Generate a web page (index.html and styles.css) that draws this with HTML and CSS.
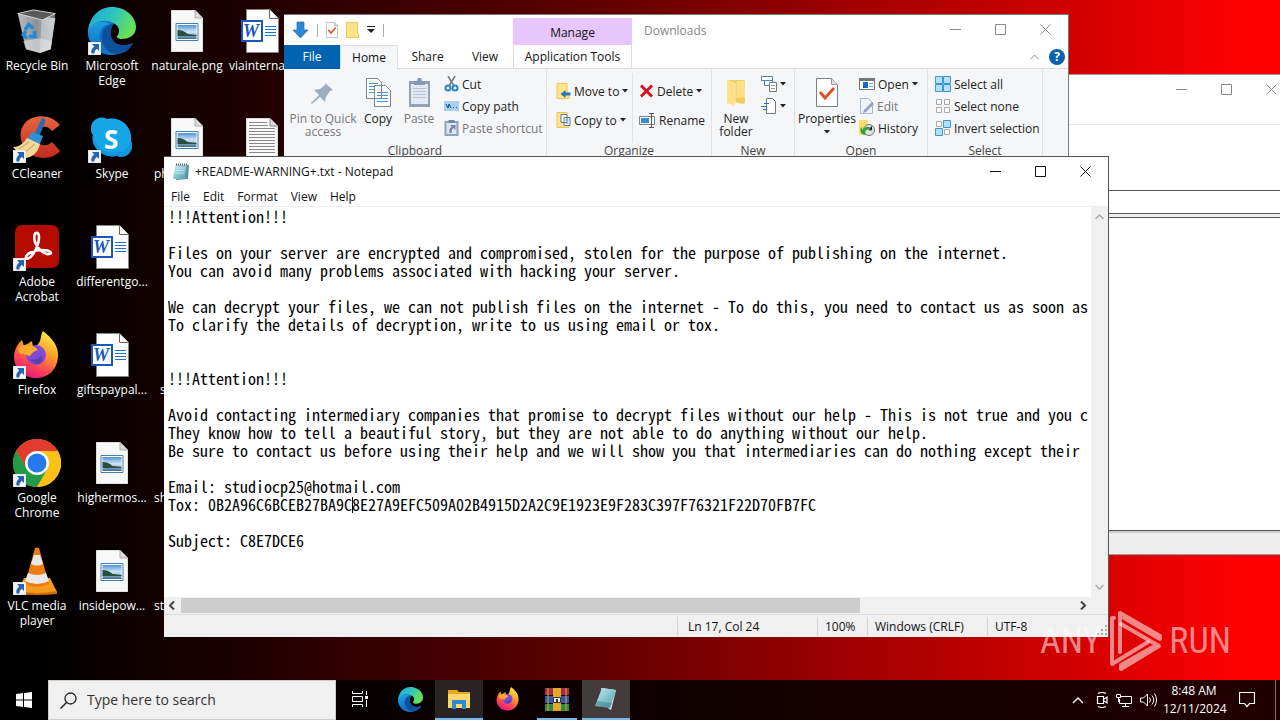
FILE: index.html
```html
<!DOCTYPE html>
<html lang="en">
<head>
<meta charset="utf-8">
<title>Desktop</title>
<link rel="stylesheet" href="styles.css">
</head>
<body>
<svg class="sprite" aria-hidden="true">
  <defs>
    <linearGradient id="edgeBlue" x1="0" y1="0" x2="0" y2="1"><stop offset="0" stop-color="#1fa0e0"/><stop offset="1" stop-color="#0f6fc4"/></linearGradient>
    <linearGradient id="edgeGreen" x1="0" y1="0" x2="1" y2=".4"><stop offset="0" stop-color="#1fa4dc"/><stop offset=".5" stop-color="#2cc3c4"/><stop offset="1" stop-color="#66df58"/></linearGradient>
    <linearGradient id="bin" x1="0" y1="0" x2="1" y2="0"><stop offset="0" stop-color="#b9bcbf"/><stop offset=".5" stop-color="#8f9194"/><stop offset="1" stop-color="#c6c8ca"/></linearGradient>
    <linearGradient id="fox" x1=".8" y1="0" x2=".3" y2="1"><stop offset="0" stop-color="#fff04a"/><stop offset=".4" stop-color="#ff9f28"/><stop offset=".75" stop-color="#fc3f55"/><stop offset="1" stop-color="#e31587"/></linearGradient>
    <linearGradient id="cc" x1="0" y1="0" x2="0" y2="1"><stop offset="0" stop-color="#e6643f"/><stop offset="1" stop-color="#c22b1e"/></linearGradient>
    <linearGradient id="note" x1="0" y1="0" x2="1" y2="1"><stop offset="0" stop-color="#c4ecf2"/><stop offset="1" stop-color="#4d9dae"/></linearGradient>
    <linearGradient id="sky" x1="0" y1="0" x2="0" y2="1"><stop offset="0" stop-color="#4f93d8"/><stop offset=".5" stop-color="#d3e6f4"/><stop offset="1" stop-color="#3c6e90"/></linearGradient>
  </defs>
  <symbol id="shortcut" viewBox="0 0 13 13"><path fill="#f4f4f4" stroke="#bbb" stroke-width=".5" d="M0 0h13v13H0z"/><path fill="#2463ae" d="M4 2h7v7L8.800 6.800Q6.500 8.500 6.300 11.500H3.500Q2.500 7 6.300 4.400z"/></symbol>
  <symbol id="recycle" viewBox="0 0 48 48"><path fill="url(#bin)" d="M3 5l41 5-5 34-12 4-15-4z"/><path fill="#5a5a58" d="M3 5l17-4 24 4-14 7z"/><path fill="none" stroke="#ddd" d="M3 5l17-4 24 4-14 7z"/><path fill="#d6d8da" opacity=".55" d="M29 12l15-7-5 39-12 4z"/><path fill="#e4e5e5" opacity=".6" d="M9 35l18-3 13 3-1 9-12 4-15-4z"/><g fill="none" stroke="#2489d6" stroke-width="4"><path d="M11 23l4-6 5 4"/><path d="M21 24l1 6h-7"/><path d="M13 32l-4-4 3-4"/></g></symbol>
  <symbol id="edge" viewBox="0 0 48 48"><path fill="#1272c4" d="M0 25C0 38 10 48 23 48c9 0 17-4 22-12-8 4-20 3-22-7-1-5 0-9 3-13-12-7-25-2-26 9z"/><path fill="#0e4f9e" d="M16 22c-6 10 0 25 14 25 8-1 12-5 15-11-10 5-21 1-22-7-1-5 0-9 3-12-4 0-8 2-10 5z"/><path fill="url(#edgeBlue)" d="M0 25C2 14 14 13 22 17c-11 1-15 15-6 27C7 41 0 34 0 25z"/><path fill="url(#edgeGreen)" d="M0 25C1 10 11 0 24 0c14 0 24 10 24 20 0 9-8 12-14 12-4 0-6-2-5-3 3-3 3-9-2-12C18 11 4 13 0 25z"/></symbol>
  <symbol id="ccleaner" viewBox="0 0 48 48"><path fill="url(#cc)" d="M47 10C40 1 27-1 17 4 6 10 5 24 12 34c8 11 26 12 35 2l-8-9c-5 5-12 4-15-1-3-6 0-12 5-14 4-1 8 1 10 4z"/><path fill="#1e6fb6" d="M28 5c1-3 5-2 4 2l-6 15-5-2z"/><path fill="#318fd2" d="M19 17l11 4-3 8-13-5z"/><path fill="#f3d79b" d="M14 23l13 6c-2 9-9 15-17 14L0 32c6 0 10-3 14-9z"/><path stroke="#ca9b52" d="M6 34l10-7M10 39l12-10"/></symbol>
  <symbol id="skype" viewBox="0 0 48 48"><path fill="#16a6e8" d="M3 13C3 5 12 0 19 4c14-3 26 8 24 22 4 9-4 19-14 15C15 44 2 32 5 20 3 18 3 16 3 13z"/><path fill="#0b8bd5" opacity=".55" d="M5 20c2 12 12 20 24 17 7 0 13-4 14-11 4 9-4 19-14 15C15 44 2 32 5 20z"/></symbol>
  <symbol id="acrobat" viewBox="0 0 48 48"><rect x="2" y="2" width="44" height="43" rx="7" fill="#b30b00"/><path fill="none" stroke="#fff" stroke-width="2.600" stroke-linejoin="round" d="M23 10c4-1 4 7 0 16-4 8-8 11-10 9-1-4 8-8 16-8 9 0 11 4 7 4-5 1-12-6-14-12-1-4-1-8 1-9z"/></symbol>
  <symbol id="firefox" viewBox="0 0 48 48"><path fill="url(#fox)" d="M30 0c9 7 16 15 15 26-1 13-10 21-22 21C10 47 1 37 1 26 1 20 4 13 9 9l2 6 8-5 1 6c3-1 5-2 7-6 1-4 1-7 3-10z"/><circle cx="23" cy="24" r="10" fill="#8248d8"/><path fill="#ffab2e" d="M5 17c7-5 15-4 20 2-4 1-6 3-8 6-4 0-6-3-10-2z"/><path fill="#5b3fb0" d="M17 28c5 2 9 0 11-4 5 7-5 14-11 4z"/></symbol>
  <symbol id="chrome" viewBox="0 0 48 48"><circle cx="24" cy="24" r="24" fill="#fbc116"/><path fill="#e33b2e" d="M3.200 12a24 24 0 0 1 41.600 0H24L13.600 30z"/><path fill="#229a48" d="M3.200 12A24 24 0 0 0 24 48l11-18-11 6-10-6z"/><path fill="#fbc116" d="M24 48l10.400-18L34 12h10.800A24 24 0 0 1 24 48z"/><circle cx="24" cy="24" r="12" fill="#fff"/><circle cx="24" cy="24" r="9.500" fill="#2479ec"/></symbol>
  <symbol id="vlc" viewBox="0 0 48 48"><path fill="#f59a1c" d="M11 31h26l7 14q-20 3-40 0z"/><path fill="#d76a08" d="M4 44q20 4 40 0v3q-20 2-40 0z"/><path fill="#ef7d0d" d="M22 1q2-1 4 0l10 36q-12 6-24 0z"/><path fill="#e9e9e9" d="M21 8h6l3 9q-6 3-12 0zM15 26q9 4 18 0l3 8q-12 6-24 0z"/></symbol>
  <symbol id="image" viewBox="0 0 32 42"><path fill="#f8f8f8" stroke="#aaa" stroke-width=".6" d="M0 0h24l8 8v34H0z"/><path fill="#ddd" stroke="#888" stroke-width=".6" d="M24 0v8h8z"/><path fill="#fff" stroke="#447fb4" d="M5 13.500h22v17H5z"/><path fill="url(#sky)" d="M6.500 15h19v14h-19z"/><path fill="#274f3d" d="M6.500 20q6 0 10 4l9 1v1h-19z"/></symbol>
  <symbol id="word" viewBox="0 0 38 44"><path fill="#fff" stroke="#888" stroke-width=".8" d="M5.500.5h23l9 9v34h-32z"/><path fill="#fff" stroke="#666" d="M28.500.5v9h9"/><path fill="#1858b8" d="M0 11h22v22H0z"/><path fill="#fff" d="M2 13h18v18H2z"/><path stroke="#1e70c8" d="M24 17.500h11M24 20.500h11M24 23.500h11M24 26.500h11"/></symbol>
  <symbol id="textfile" viewBox="0 0 32 42"><path fill="#fafafa" stroke="#999" stroke-width=".6" d="M0 0h24l8 8v34H0z"/><path fill="#ddd" stroke="#888" d="M24 0v8h8z"/><path stroke="#888" d="M3 4.500h18M3 7.500h19M3 10.500h26M3 13.500h26M3 16.500h26M3 19.500h26M3 22.500h26M3 25.500h26M3 28.500h26M3 31.500h26M3 34.500h26"/></symbol>
  <symbol id="notepad" viewBox="0 0 16 17"><path fill="#5d8f99" d="M3 2h13l-1 14-12 1z"/><path fill="url(#note)" d="M2.500 2H14l-2 14H0z"/><path stroke="#eaffff" stroke-width=".6" d="M3 5h9M2.500 7.500h9M2 10h9"/><path stroke="#555" stroke-dasharray="1 1" stroke-width="2" d="M3 1.500h11"/></symbol>
  <symbol id="chev" viewBox="0 0 6 4"><path fill="currentColor" d="M0 0h6L3 3.500z"/></symbol>
  <symbol id="min" viewBox="0 0 11 11"><path stroke="currentColor" d="M0 5.500h11"/></symbol>
  <symbol id="max" viewBox="0 0 11 11"><path fill="none" stroke="currentColor" d="M.5.5h10v10H.5z"/></symbol>
  <symbol id="close" viewBox="0 0 11 11"><path stroke="currentColor" d="M.5.5l10 10M10.500.5l-10 10"/></symbol>
  <symbol id="folder" viewBox="0 0 20 26"><path fill="#f3cd5b" d="M1 1h17v22l-2 1-8-2z"/><path fill="#ffe8a3" d="M1 1l8 3v20H1z"/><path fill="#ffe08a" d="M1 1l7 5v20l-7-4zM10 2h8v16h-8z"/></symbol>
  <symbol id="check" viewBox="0 0 22 29"><path fill="#fff" stroke="#7b7f84" d="M.5.5h15l6 6v22H.5z"/><path fill="#ddd" stroke="#999" d="M15.500.5v6h6"/><path fill="none" stroke="#dd5128" stroke-width="2.800" d="M4 14l5 6 9-10"/></symbol>
</svg>

<main class="desktop">
  <section class="icons" aria-label="Desktop icons">
    <div class="item"><span class="pic"><svg class="p-bin"><use href="#recycle"/></svg></span><span class="name">Recycle Bin</span></div>
    <div class="item"><span class="pic"><svg class="p-app"><use href="#ccleaner"/></svg><svg class="sc"><use href="#shortcut"/></svg></span><span class="name">CCleaner</span></div>
    <div class="item"><span class="pic"><svg class="p-app"><use href="#acrobat"/></svg><svg class="sc"><use href="#shortcut"/></svg></span><span class="name">Adobe Acrobat</span></div>
    <div class="item"><span class="pic"><svg class="p-app"><use href="#firefox"/></svg><svg class="sc"><use href="#shortcut"/></svg></span><span class="name">Firefox</span></div>
    <div class="item"><span class="pic"><svg class="p-app"><use href="#chrome"/></svg><svg class="sc"><use href="#shortcut"/></svg></span><span class="name">Google Chrome</span></div>
    <div class="item"><span class="pic"><svg class="p-app"><use href="#vlc"/></svg><svg class="sc"><use href="#shortcut"/></svg></span><span class="name">VLC media player</span></div>

    <div class="item"><span class="pic"><svg class="p-app"><use href="#edge"/></svg><svg class="sc"><use href="#shortcut"/></svg></span><span class="name">Microsoft Edge</span></div>
    <div class="item"><span class="pic"><svg class="p-app"><use href="#skype"/></svg><b class="letter-s">S</b><svg class="sc"><use href="#shortcut"/></svg></span><span class="name">Skype</span></div>
    <div class="item"><span class="pic doc"><svg class="p-word"><use href="#word"/></svg><b class="letter-w">W</b></span><span class="name">differentgo...</span></div>
    <div class="item"><span class="pic doc"><svg class="p-word"><use href="#word"/></svg><b class="letter-w">W</b></span><span class="name">giftspaypal...</span></div>
    <div class="item"><span class="pic"><svg class="p-file"><use href="#image"/></svg></span><span class="name">highermos...</span></div>
    <div class="item"><span class="pic"><svg class="p-file"><use href="#image"/></svg></span><span class="name">insidepow...</span></div>

    <div class="item"><span class="pic"><svg class="p-file"><use href="#image"/></svg></span><span class="name">naturale.png</span></div>
    <div class="item"><span class="pic"><svg class="p-file"><use href="#image"/></svg></span><span class="name cut">ph</span></div>
    <div class="item"></div>
    <div class="item"><span class="pic"></span><span class="name cut s">s</span></div>
    <div class="item"><span class="pic"></span><span class="name cut">sh</span></div>
    <div class="item"><span class="pic"></span><span class="name cut">st</span></div>

    <div class="item"><span class="pic doc"><svg class="p-word"><use href="#word"/></svg><b class="letter-w">W</b></span><span class="name cut">viainternat</span></div>
    <div class="item"><span class="pic"><svg class="p-file"><use href="#textfile"/></svg></span></div>
  </section>

  <section class="window back" aria-label="Background window">
    <div class="caption dim"><span class="ctl"><button aria-label="Minimize"><svg><use href="#min"/></svg></button><button aria-label="Maximize"><svg><use href="#max"/></svg></button><button aria-label="Close"><svg><use href="#close"/></svg></button></span></div>
    <div class="back-head"></div><div class="back-field"></div><div class="back-gap"></div><div class="back-body"></div><div class="back-status"></div>
  </section>

  <section class="window explorer" aria-label="Downloads">
    <header class="ex-title">
      <div class="quick">
        <svg width="17" height="18" viewBox="0 0 17 18"><path fill="#2b88d8" stroke="#1c6fb5" stroke-width=".7" d="M5 1h7v8h4l-7.500 8L1 9h4z"/></svg>
        <i class="tick"></i>
        <svg width="12" height="16"><use href="#check"/></svg>
        <svg width="13" height="16" viewBox="0 0 13 16"><path fill="#ffe48c" stroke="#edc75b" d="M.5.5h11V11l1 1v3.500H.5z"/></svg>
        <svg width="8" height="8" viewBox="0 0 8 8"><path fill="#222" d="M0 0h8v1H0zM0 3h8L4 7z"/></svg>
        <i class="tick"></i>
      </div>
      <div class="manage">Manage</div>
      <div class="ex-name">Downloads</div>
      <span class="ctl dim"><button aria-label="Minimize"><svg><use href="#min"/></svg></button><button aria-label="Maximize"><svg><use href="#max"/></svg></button><button aria-label="Close"><svg><use href="#close"/></svg></button></span>
    </header>
    <nav class="tabs">
      <button class="file">File</button><button class="home">Home</button><button class="share">Share</button><button class="view">View</button><button class="tools">Application Tools</button>
      <span class="help"><svg width="9" height="6" viewBox="0 0 9 6"><path fill="none" stroke="#888" d="M.5 5l4-4 4 4"/></svg><b>?</b></span>
    </nav>
    <div class="ribbon">
      <div class="group g-clip">
        <div class="row">
          <button class="big pin off"><svg width="24" height="24" viewBox="0 0 24 24"><path fill="#9faebf" d="M14 2l8 7-3 1-4 6-1 5-5-5-8 7-1-1 8-8-5-5 6-1 5-4z"/></svg>Pin to Quick access</button>
          <button class="big copy"><svg width="25" height="29" viewBox="0 0 25 29"><g fill="#fff" stroke="#788694"><path d="M.5.5h11l4 4v16H.5zM8.500 7.500h11l5 5v16h-16z"/></g><path stroke="#4d92d4" d="M3 5.500h9M3 8.500h5M3 11.500h5M3 14.500h5M11 14.500h11M11 17.500h11M11 20.500h11M11 23.500h11"/></svg>Copy</button>
          <button class="big paste off"><svg width="21" height="29" viewBox="0 0 21 29"><path fill="#8da3bd" d="M0 3h21v26H0z"/><path fill="#e2e9f3" d="M2 6h17v20H2z"/><path fill="#8499b2" d="M5 3h3l1-3h3l1 3h3v4H5z"/><path stroke="#b6c7dd" d="M4 10.500h13M4 13.500h13M4 16.500h13M4 19.500h13"/></svg>Paste</button>
          <div class="stack">
            <button><svg width="15" height="16" viewBox="0 0 15 16"><path stroke="#777" stroke-width="1.500" d="M4 0l6 10M11 0L5 10"/><g fill="none" stroke="#2e83c7" stroke-width="2"><circle cx="4" cy="12" r="2.500"/><circle cx="11" cy="12" r="2.500"/></g></svg>Cut</button>
            <button><svg width="15" height="10" viewBox="0 0 15 10"><path fill="#a7d0f3" d="M0 0h15v10H0z"/><path fill="none" stroke="#174b7c" d="M2 3l2 4 1-4 2 4M9 6.500h1M12 6.500h1"/></svg>Copy path</button>
            <button class="off"><svg width="14" height="16" viewBox="0 0 14 16"><path fill="#dce6f1" stroke="#8da3bd" stroke-width="2" d="M1 2h12v13H1z"/><path fill="#6f88aa" d="M4 0h6v3H4zM6 5h5v5L9 8q-2 1-2 5H5q-1-4 2-6z"/></svg>Paste shortcut</button>
          </div>
        </div>
        <span class="cap">Clipboard</span>
      </div>
      <div class="group g-org">
        <div class="row split">
          <div class="stack two">
            <button><svg width="14" height="16" viewBox="0 0 14 16"><path fill="#ffe48c" stroke="#edc75b" d="M.5.5h10V9l2 1v5.500H.5z"/><path fill="#2c75b9" d="M4 11l5-4v2.500h5v3H9V15z"/></svg>Move to<svg class="dd"><use href="#chev"/></svg></button>
            <button><svg width="14" height="16" viewBox="0 0 14 16"><path fill="#ffe48c" stroke="#edc75b" d="M.5.5h10V9l2 1v5.500H.5z"/><path fill="#fff" stroke="#5a7698" d="M4.500 2.500h6v8h-6zM7.500 5.500h6v8h-6z"/><path stroke="#4d92d4" d="M9 8h3M9 11h3"/></svg>Copy to<svg class="dd"><use href="#chev"/></svg></button>
          </div>
          <div class="stack two del">
            <button><svg width="15" height="14" viewBox="0 0 15 14"><path stroke="#d3131d" stroke-width="3" d="M2 1.500l11 11M13 1.500l-11 11"/></svg>Delete<svg class="dd"><use href="#chev"/></svg></button>
            <button><svg width="17" height="15" viewBox="0 0 17 15"><path fill="#fff" stroke="#73879b" d="M.5 3.500h15v8H.5z"/><path fill="#3a88cf" d="M2 5h8v5H2z"/><path stroke="#555" d="M10 .5h5M12.500 1v13M10 14.500h5"/></svg>Rename</button>
          </div>
        </div>
        <span class="cap">Organize</span>
      </div>
      <div class="group g-new">
        <div class="row">
          <button class="big nf"><svg width="21" height="29"><use href="#folder"/></svg>New folder</button>
          <div class="stack mini">
            <button aria-label="New item"><svg width="16" height="16" viewBox="0 0 16 16"><path fill="#fff" stroke="#4c84b4" d="M.5.5h11v4H.5zM3.500 4.500h8v5h-8z"/><path fill="#fff" stroke="#777" d="M8.500 6.500h7v9h-7z"/><path stroke="#999" d="M10 9.500h4M10 12.500h4"/></svg><svg class="dd"><use href="#chev"/></svg></button>
            <button aria-label="Easy access"><svg width="16" height="16" viewBox="0 0 16 16"><path fill="#fff" stroke="#777" d="M5.500.5h6l3 3v12h-9z"/><path stroke="#2e75b5" d="M3 5.500h5M0 8.500h6M2 11.500h4"/></svg><svg class="dd"><use href="#chev"/></svg></button>
          </div>
        </div>
        <span class="cap">New</span>
      </div>
      <div class="group g-open">
        <div class="row">
          <button class="big prop"><svg width="22" height="29"><use href="#check"/></svg>Properties<svg class="dd"><use href="#chev"/></svg></button>
          <div class="stack">
            <button><svg width="16" height="12" viewBox="0 0 16 12"><path fill="#fff" stroke="#777" d="M.5.5h15v11H.5z"/><path fill="#777" d="M0 0h16v3H0z"/><path fill="#0b6fc6" d="M4 4h5v6H4z"/><path stroke="#65a0d3" d="M10 5.500h4M10 8.500h4"/></svg>Open<svg class="dd"><use href="#chev"/></svg></button>
            <button class="off"><svg width="15" height="16" viewBox="0 0 15 16"><path fill="#edf2f8" stroke="#a8b9cc" d="M1.500.5h8l4 4v11h-12z"/><path fill="#8fa5bf" d="M13 4l2 2-8 8-3 1 1-3z"/></svg>Edit</button>
            <button><svg width="16" height="16" viewBox="0 0 16 16"><path fill="#ffdc67" d="M0 0h9v9l3 6H0z"/><circle cx="10" cy="10" r="5.500" fill="#d8e4df" stroke="#777"/><path fill="#30a33e" d="M2 7l2 3c2-4 5-4 8-2l-6 3 1 4c-4 0-7-3-5-8z"/><path stroke="#555" d="M13 6l-3 4h3"/></svg>History</button>
          </div>
        </div>
        <span class="cap">Open</span>
      </div>
      <div class="group g-sel">
        <div class="row">
          <div class="stack">
            <button><svg width="16" height="16" viewBox="0 0 16 16"><path fill="#b9e0fb" stroke="#3796dc" d="M.5.5h7v7h-7zM8.500.5h7v7h-7zM.5 8.500h7v7h-7zM8.500 8.500h7v7h-7z"/></svg>Select all</button>
            <button><svg width="16" height="16" viewBox="0 0 16 16"><path fill="#fff" stroke="#aaa" d="M1.500 1.500h5v5h-5zM9.500 1.500h5v5h-5zM1.500 9.500h5v5h-5zM9.500 9.500h5v5h-5z"/></svg>Select none</button>
            <button><svg width="16" height="16" viewBox="0 0 16 16"><path fill="#fff" stroke="#aaa" d="M1.500 1.500h5v5h-5zM9.500 9.500h5v5h-5z"/><path fill="#b9e0fb" stroke="#3796dc" d="M8.500.5h7v7h-7zM.5 8.500h7v7h-7z"/></svg>Invert selection</button>
          </div>
        </div>
        <span class="cap">Select</span>
      </div>
    </div>
  </section>

  <section class="window np" aria-label="Notepad">
    <header class="caption"><svg class="np-ico"><use href="#notepad"/></svg><span>+README-WARNING+.txt - Notepad</span><span class="ctl"><button aria-label="Minimize"><svg><use href="#min"/></svg></button><button aria-label="Maximize"><svg><use href="#max"/></svg></button><button aria-label="Close"><svg><use href="#close"/></svg></button></span></header>
    <nav class="menu"><button>File</button><button>Edit</button><button>Format</button><button>View</button><button>Help</button></nav>
    <div class="edit">
      <div class="paper">
<textarea wrap="off" aria-label="Text editor" spellcheck="false">!!!Attention!!!

Files on your server are encrypted and compromised, stolen for the purpose of publishing on the internet.
You can avoid many problems associated with hacking your server.

We can decrypt your files, we can not publish files on the internet - To do this, you need to contact us as soon as
To clarify the details of decryption, write to us using email or tox.


!!!Attention!!!

Avoid contacting intermediary companies that promise to decrypt files without our help - This is not true and you c
They know how to tell a beautiful story, but they are not able to do anything without our help.
Be sure to contact us before using their help and we will show you that intermediaries can do nothing except their

Email: studiocp25@hotmail.com
Tox: 0B2A96C6BCEB27BA9C8E27A9EFC509A02B4915D2A2C9E1923E9F283C397F76321F22D70FB7FC

Subject: C8E7DCE6</textarea>
        <i class="caret"></i>
      </div>
      <div class="vbar"><svg width="9" height="6" viewBox="0 0 9 6"><path fill="none" stroke="#aaa" stroke-width="1.500" d="M.5 5l4-4 4 4"/></svg><svg width="9" height="6" viewBox="0 0 9 6"><path fill="none" stroke="#aaa" stroke-width="1.500" d="M.5 1l4 4 4-4"/></svg></div>
    </div>
    <div class="hbar"><svg width="6" height="9" viewBox="0 0 6 9"><path fill="none" stroke="#444" stroke-width="2" d="M5 .5l-4 4 4 4"/></svg><span class="track"><i class="thumb"></i></span><svg width="6" height="9" viewBox="0 0 6 9"><path fill="none" stroke="#444" stroke-width="2" d="M1 .5l4 4-4 4"/></svg></div>
    <footer class="status"><span class="c1">Ln 17, Col 24</span><span class="c2">100%</span><span class="c3">Windows (CRLF)</span><span class="c4">UTF-8</span><svg width="10" height="10" viewBox="0 0 10 10"><path fill="#aaa" d="M8 0h2v2H8zM4 4h2v2H4zM8 4h2v2H8zM0 8h2v2H0zM4 8h2v2H4zM8 8h2v2H8z"/></svg></footer>
  </section>

  <div class="mark" aria-label="ANY RUN"><span>ANY</span>
    <svg width="56" height="62" viewBox="0 0 56 62"><g fill="none" stroke="currentColor" stroke-width="4" stroke-linejoin="round" stroke-linecap="round"><path d="M13 42V3l40 23v3L17 8"/><path d="M7 8H5v46l36-22"/><path d="M14 14l38 22L14 59v-4l32-18"/></g></svg>
    <span>RUN</span></div>
</main>

<footer class="taskbar">
  <button class="start" aria-label="Start"><svg width="16" height="16" viewBox="0 0 16 16"><path fill="#fff" d="M0 2l7-1v6.500H0zM8 1l8-1v7.500H8zM0 8.500h7V15l-7-1zM8 8.500h8V16l-8-1z"/></svg></button>
  <label class="search"><svg width="17" height="17" viewBox="0 0 17 17"><circle cx="10.500" cy="6.500" r="5.500" fill="none" stroke="#222" stroke-width="1.300"/><path stroke="#222" stroke-width="1.500" d="M6.500 10.500L.5 16.500"/></svg><input type="text" placeholder="Type here to search" aria-label="Search"></label>
  <div class="apps">
    <button class="tv" aria-label="Task view"><svg width="17" height="16" viewBox="0 0 17 16"><path fill="none" stroke="#fff" d="M.5 0v2.500h10V0M.5 5.500h10v5H.5zM.5 16v-2.500h10V16M14.500 0v4M14.500 9v7"/><path fill="#fff" d="M13 5h3v3h-3z"/></svg></button>
    <button aria-label="Edge"><svg width="25" height="25"><use href="#edge"/></svg></button>
    <button class="on" aria-label="File Explorer"><svg width="22" height="20" viewBox="0 0 22 20"><path fill="#e9a524" d="M0 1h9l2 2h11v4H0z"/><path fill="#ffd868" d="M0 5h22v14H0z"/><path fill="#2f88d0" d="M4 11h14v9h-4v-5H8v5H4z"/></svg></button>
    <button aria-label="Firefox"><svg width="24" height="24"><use href="#firefox"/></svg></button>
    <button class="run" aria-label="WinRAR"><svg width="24" height="23" viewBox="0 0 24 23"><path fill="#a52d42" d="M0 0h24v7H0z"/><path fill="#3656a8" d="M0 8h24v7H0z"/><path fill="#2f8743" d="M0 16h24v7H0z"/><path stroke="#d9a93f" d="M3 0v23M21 0v23"/><path fill="#e6a828" d="M8 0h8v23H8z"/><path fill="#eee" stroke="#333" d="M8.500 9.500h7v5h-7z"/><path fill="#333" d="M11 11h2v3h-2z"/></svg></button>
    <button class="on act" aria-label="Notepad"><svg width="22" height="22" viewBox="0 0 22 22"><path fill="#e8edf0" d="M6 0l15 2-5 20-3-2z"/><path fill="url(#note)" d="M7 0l14 2-6 18-15-2z"/><path fill="#326b7a" opacity=".4" d="M2 13l15 2-2 5-15-2z"/></svg></button>
  </div>
  <div class="tray">
    <svg width="12" height="8" viewBox="0 0 12 8"><path fill="none" stroke="#fff" stroke-width="1.300" d="M1 7l5-5 5 5"/></svg>
    <svg width="12" height="16" viewBox="0 0 12 16"><path fill="none" stroke="#fff" stroke-width="1.200" d="M1.500 4.500h6v7h-6zM8 7l3-2v6L8 9M2 1.500q4-2 8 0M2 14.500q4 2 8 0"/></svg>
    <svg width="16" height="14" viewBox="0 0 16 14"><path fill="none" stroke="#fff" d="M5 3.500h10.500v7H3.500V6M9.500 11v2.500M6 13.500h7M.5 1.500h4v3h-4zM2.500 5v4"/></svg>
    <svg width="17" height="14" viewBox="0 0 17 14"><path fill="none" stroke="#fff" d="M.5 5h3l4-4v12l-4-4h-3zM9.500 4.500q2 2.500 0 5M12 2.500q3.500 4.500 0 9M14.500.5q4 6.500 0 13"/></svg>
    <time class="clock"><span>8:48 AM</span><span>12/11/2024</span></time>
    <svg width="16" height="16" viewBox="0 0 16 16"><path fill="none" stroke="#fff" stroke-width="1.200" d="M.5.5h15v11h-5L8 14.500l-2.500-3h-5z"/></svg>
    <i class="peek"></i>
  </div>
</footer>
</body>
</html>
```

FILE: styles.css
```css
* { box-sizing: border-box; }
body {
  margin: 0;
  min-height: 100vh;
  display: flex;
  flex-direction: column;
  overflow: hidden;
  font: 12px/15px "Open Sans", "Noto Sans", sans-serif;
  color: #111;
  background: linear-gradient(90deg, #000 0, #000 3%, #240000 22%, #640000 48%, #a40000 68%, #d80000 86%, #ff0000 97%);
}
button { font: inherit; color: inherit; background: none; border: 0; padding: 0; white-space: nowrap; }
svg { display: block; flex: none; }
.sprite { position: absolute; width: 0; height: 0; }
.desktop { position: relative; flex: 1; overflow: hidden; }

/* Desktop icons */
.icons {
  display: grid;
  grid-auto-flow: column;
  grid-template-rows: repeat(6, 108px);
  grid-auto-columns: 75px;
  width: 300px;
  padding-top: 7px;
  color: #fff;
}
.item { display: flex; flex-direction: column; align-items: center; gap: 3px; width: 74px; text-align: center; }
.pic { position: relative; width: 48px; height: 48px; display: flex; justify-content: center; align-items: center; }
.doc { justify-content: flex-start; padding-left: 3px; }
.name { width: 74px; text-shadow: 1px 1px 1px #000; }
.cut { text-align: left; padding-left: 4px; }
.s { padding-left: 10px; }
.p-bin { width: 44px; height: 44px; }
.p-app { width: 48px; height: 48px; }
.p-file { width: 32px; height: 42px; }
.p-word { width: 38px; height: 44px; }
.sc { position: absolute; left: 0; bottom: 0; width: 13px; height: 13px; }
.letter-s { position: absolute; left: 16px; top: 9px; font: 700 26px/30px "Open Sans", sans-serif; }
.letter-w { position: absolute; left: 5px; top: 14px; color: #1858b8; font: italic 700 18px/20px "Liberation Serif", serif; }

/* Windows */
.window { position: absolute; display: flex; flex-direction: column; background: #fff; border: 1px solid #555; }
.caption { height: 30px; display: flex; align-items: center; }
.ctl { margin-left: auto; display: flex; }
.ctl button { width: 45px; height: 28px; display: grid; place-items: center; }
.ctl svg { width: 11px; height: 11px; }
.dim .ctl, .ctl.dim { color: #888; }

.back { left: 860px; right: -15px; top: 74px; bottom: 125px; border-color: #999; }
.back .caption { height: 50px; align-items: flex-start; border-bottom: 1px solid #e8e8e8; }
.back-head { height: 65px; }
.back-field { height: 24px; border: 1px solid #555; }
.back-gap { height: 4px; background: #eee; border-bottom: 1px solid #555; }
.back-body { flex: 1; border-bottom: 1px solid #555; }
.back-status { height: 23px; background: #eee; border-top: 2px solid #ccc; }

.explorer { left: 284px; right: 211px; top: 14px; height: 220px; border-color: #777; border-width: 1px 1px 1px 0; }
.ex-title { display: flex; height: 30px; align-items: flex-start; }
.quick { display: flex; align-items: center; width: 229px; height: 30px; padding-left: 8px; gap: 8px; }
.tick { width: 1px; height: 13px; background: #aaa; }
.manage { width: 119px; height: 27px; margin-top: 3px; padding-top: 7px; text-align: center; background: #e7c6fb; }
.ex-name { padding: 8px 12px; color: #888; }
.tabs { display: flex; height: 24px; }
.tabs button { height: 24px; border-bottom: 1px solid #ddd; }
.tabs .file { width: 56px; color: #fff; background: #0063b1; border-color: #0063b1; }
.tabs .home { width: 58px; background: #f5f6f7; border: 1px solid #ddd; border-bottom: 0; }
.tabs .share { width: 59px; }
.tabs .view { width: 56px; }
.tabs .tools { width: 119px; border: 1px solid #ddd; border-top: 0; }
.help { flex: 1; display: flex; justify-content: flex-end; align-items: center; gap: 10px; padding-right: 3px; border-bottom: 1px solid #ddd; }
.help b { width: 16px; height: 16px; border-radius: 50%; text-align: center; color: #fff; background: #0b62ad; }
.ribbon { flex: 1; display: flex; background: #f5f6f7; }
.group { display: flex; flex-direction: column; height: 92px; border-right: 1px solid #e0e1e2; padding-top: 4px; color: #222; }
.row { height: 70px; display: flex; }
.cap { text-align: center; color: #444; }
.big { display: flex; flex-direction: column; align-items: center; height: 71px; padding-top: 5px; line-height: 13px; white-space: normal; gap: 5px; }
.off { color: #777; }
.stack { display: flex; flex-direction: column; }
.stack button { display: flex; align-items: center; gap: 3px; height: 22px; }
.stack button > svg:first-child { min-width: 15px; }
.dd { width: 6px; height: 4px; }
.g-clip { width: 263px; }
.g-org { width: 165px; }
.g-new { width: 83px; }
.g-open { width: 133px; }
.g-sel { width: 115px; }
.pin { width: 78px; padding-top: 8px; gap: 7px; }
.copy { width: 32px; }
.paste { width: 50px; }
.g-clip .stack { overflow: hidden; }
.two { width: 85px; padding: 7px 0 0 9px; gap: 7px; }
.two + .two { width: 79px; padding-left: 6px; border-left: 1px solid #e0e1e2; }
.nf { width: 48px; }
.mini { padding-left: 1px; }
.g-open .prop { width: 64px; }
.g-sel .stack { padding-left: 7px; }

/* Notepad */
.np { left: 164px; right: 171px; top: 156px; bottom: 43px; border-left: 0; border-bottom: 0; background: #fff; }
.np .caption { height: 29px; }
.np-ico { width: 16px; height: 17px; margin: 0 6px 0 9px; }
.menu { display: flex; height: 21px; gap: 13px; padding-left: 7px; border-bottom: 1px solid #eee; }
.edit { flex: 1; display: flex; min-height: 0; }
.paper { position: relative; flex: 1; padding: 0 3px 0 4px; }
.paper textarea {
  display: block; width: 100%; height: 100%;
  border: 0; padding: 0; outline: 0; resize: none; overflow: hidden;
  font: 16px/18px "Noto Sans Mono CJK SC", "Liberation Mono", monospace; color: #000; background: #fff;
  white-space: pre;
}
.caret { position: absolute; left: 188px; top: 290px; width: 1px; height: 16px; background: #000; }
.vbar { width: 17px; display: flex; flex-direction: column; justify-content: space-between; align-items: center; padding: 7px 0; background: #f0f0f0; }
.hbar { display: flex; align-items: center; height: 17px; padding: 0 22px 0 5px; gap: 6px; background: #f0f0f0; }
.track { flex: 1; }
.thumb { display: block; width: 76%; height: 15px; background: #cdcdcd; }
.status { display: flex; justify-content: flex-end; height: 23px; align-items: center; background: #f0f0f0; border-top: 1px solid #ddd; }
.status span { height: 19px; line-height: 20px; padding-left: 7px; border-left: 1px solid #d4d4d4; }
.status .c1 { width: 140px; padding-left: 10px; }
.status .c2 { width: 50px; }
.status .c3 { width: 120px; }
.status .c4 { width: 110px; }
.status svg { margin: 8px 1px 0 0; }

.mark { position: absolute; right: 49px; bottom: 8px; display: flex; align-items: center; gap: 6px; font: 36px/40px "Liberation Sans Narrow", "Roboto Condensed", Roboto, sans-serif; color: #ffffff88; }

/* Taskbar */
.taskbar { display: flex; height: 40px; color: #fff; background: linear-gradient(90deg, #000, #0e0000 50%, #220000); }
.start { width: 48px; display: grid; place-items: center; }
.search { width: 288px; display: flex; align-items: center; gap: 10px; padding-left: 11px; background: #f0f0f0; border: 1px solid #ccc; }
.search input { flex: 1; min-width: 0; border: 0; padding: 0; background: none; font: 14px/20px "Open Sans", sans-serif; }
.search input::placeholder { color: #333; opacity: 1; }
.apps { display: flex; gap: 1px; }
.apps button { width: 48px; display: grid; place-items: center; border-bottom: 2px solid transparent; }
.apps .tv { margin-right: 1px; }
.apps .on { background: #2a2424; border-color: #76b9ed; }
.apps .act { background: #443c3c; }
.apps .run { background: linear-gradient(#76b9ed, #76b9ed) center 38px / 40px 2px no-repeat border-box; }
.tray { margin-left: auto; display: flex; align-items: center; gap: 8px; }
.clock { display: flex; flex-direction: column; width: 62px; text-align: center; line-height: 18px; }
.tray .clock { margin-left: -2px; }
.tray .clock + svg { margin-left: 6px; }
.tray > svg:first-child { margin-right: 4px; }
.peek { width: 1px; height: 40px; margin: 0 4px 0 12px; background: #777; }
```
